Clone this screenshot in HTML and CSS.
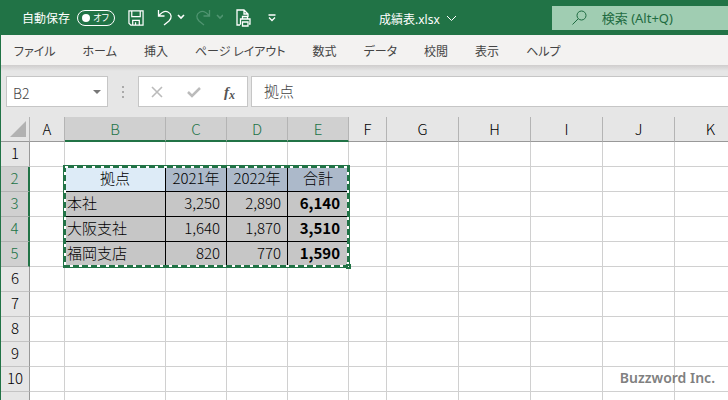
FILE: index.html
```html
<!DOCTYPE html>
<html lang="ja">
<head>
<meta charset="utf-8">
<title>成績表.xlsx</title>
<link rel="stylesheet" href="styles.css">
</head>
<body>
<div class="app">
  <header class="titlebar">
    <div class="quick">
      <label class="autosave">自動保存
        <span class="switch"><input type="checkbox" role="switch"><span class="knob"></span><span class="state">オフ</span></span>
      </label>
      <button class="tool save" aria-label="上書き保存"><svg width="16" height="16" viewBox="0 0 17 17"><path d="M1 1h15v15H3l-2-2zM4 1v6h9V1M5 16v-5h7v5M8 13v3"/></svg></button>
      <button class="tool undo" aria-label="元に戻す"><svg width="28" height="17" viewBox="0 0 28 17"><path d="M1.500 1v6h6M1.500 7C5 3 8 1.500 11 3c4 2 4 6 1 9l-5 4"/><path d="M21 6l3 3 3-3" stroke-width="1.600"/></svg></button>
      <button class="tool redo" aria-label="やり直し" disabled><svg width="28" height="17" viewBox="0 0 28 17"><path d="M14.500 1v6h-6M14.500 7C11 3 8 1.500 5 3c-4 2-4 6-1 9l5 4"/><path d="M22 6l3 3 3-3" stroke-width="1.600"/></svg></button>
      <button class="tool preview" aria-label="印刷プレビュー"><svg width="16" height="18" viewBox="0 0 16 18"><path d="M4 16H1V1h7l4 4v3M8 1v4h4M6.500 10V7.500h5V10M5 15h-.5v-5h9.500v5h-1M6.500 13h5.500v4h-5.500z"/></svg></button>
      <button class="tool more" aria-label="カスタマイズ"><svg width="8" height="8" viewBox="0 0 8 8"><path d="M0.500 1h7M1 3.500l3 3 3-3"/></svg></button>
    </div>
    <button class="doc">成績表.xlsx <svg width="11" height="7" viewBox="0 0 11 7"><path d="M1 1l4.500 4.500L10 1"/></svg></button>
    <label class="search"><svg width="15" height="15" viewBox="0 0 15 15"><circle cx="9.500" cy="5.500" r="4.500"/><path d="M6.200 8.800L.5 14.500"/></svg><input type="text" placeholder="検索 (Alt+Q)" aria-label="検索"></label>
  </header>
  <nav class="tabs">
    <a href="#">ファイル</a><a href="#">ホーム</a><a href="#">挿入</a><a href="#">ページ レイアウト</a><a href="#">数式</a><a href="#">データ</a><a href="#">校閲</a><a href="#">表示</a><a href="#">ヘルプ</a>
  </nav>
  <div class="formulabar">
    <div class="namebox"><input type="text" value="B2" aria-label="名前ボックス"><button aria-label="名前の一覧"><svg width="8" height="4" viewBox="0 0 8 4"><path d="M0 0h8L4 4z"/></svg></button></div>
    <svg class="grip" width="2" height="12" viewBox="0 0 2 12"><path d="M0 0h2v2H0zM0 5h2v2H0zM0 10h2v2H0z"/></svg>
    <div class="actions">
      <button aria-label="キャンセル" disabled><svg width="12" height="12" viewBox="0 0 12 12"><path d="M1 1l10 10M11 1L1 11"/></svg></button>
      <button aria-label="入力" disabled><svg width="14" height="12" viewBox="0 0 14 12"><path d="M1 6l4 4 8-8" stroke-width="2.500"/></svg></button>
      <button class="fx" aria-label="関数の挿入">f<sub>x</sub></button>
    </div>
    <input class="formula" type="text" value="拠点" aria-label="数式バー">
  </div>
  <main class="sheet">
    <table>
      <colgroup><col class="w-head"><col class="w-a"><col class="w-b"><col class="w-c"><col class="w-c"><col class="w-c"><col class="w-f"><col class="w-g"><col class="w-g"><col class="w-g"><col class="w-g"><col class="w-g"></colgroup>
      <thead><tr><th class="corner"><svg width="16" height="16" viewBox="0 0 16 16"><path d="M16 0v16H0z"/></svg></th><th>A</th><th class="on">B</th><th class="on">C</th><th class="on">D</th><th class="on">E</th><th>F</th><th>G</th><th>H</th><th>I</th><th>J</th><th>K</th></tr></thead>
      <tbody>
        <tr><th>1</th><td></td><td></td><td></td><td></td><td></td><td></td><td></td><td></td><td></td><td></td><td></td></tr>
        <tr><th class="on">2</th><td></td><td class="cell title active"><div class="marquee"><svg aria-hidden="true"><rect class="base" x="1.500" y="1.500" width="284" height="100"/><rect class="ants" x="2" y="2" width="283" height="99"/><rect class="handle" x="284" y="100" width="3" height="3"/></svg></div>拠点</td><td class="cell title">2021年</td><td class="cell title">2022年</td><td class="cell title">合計</td><td></td><td></td><td></td><td></td><td></td><td></td></tr>
        <tr><th class="on">3</th><td></td><td class="cell">本社</td><td class="cell num">3,250</td><td class="cell num">2,890</td><td class="cell num total">6,140</td><td></td><td></td><td></td><td></td><td></td><td></td></tr>
        <tr><th class="on">4</th><td></td><td class="cell">大阪支社</td><td class="cell num">1,640</td><td class="cell num">1,870</td><td class="cell num total">3,510</td><td></td><td></td><td></td><td></td><td></td><td></td></tr>
        <tr><th class="on">5</th><td></td><td class="cell">福岡支店</td><td class="cell num">820</td><td class="cell num">770</td><td class="cell num total">1,590</td><td></td><td></td><td></td><td></td><td></td><td></td></tr>
        <tr><th>6</th><td></td><td></td><td></td><td></td><td></td><td></td><td></td><td></td><td></td><td></td><td></td></tr>
        <tr><th>7</th><td></td><td></td><td></td><td></td><td></td><td></td><td></td><td></td><td></td><td></td><td></td></tr>
        <tr><th>8</th><td></td><td></td><td></td><td></td><td></td><td></td><td></td><td></td><td></td><td></td><td></td></tr>
        <tr><th>9</th><td></td><td></td><td></td><td></td><td></td><td></td><td></td><td></td><td></td><td></td><td></td></tr>
        <tr><th>10</th><td></td><td></td><td></td><td></td><td></td><td></td><td></td><td></td><td></td><td></td><td></td></tr>
        <tr><th></th><td></td><td></td><td></td><td></td><td></td><td></td><td></td><td></td><td></td><td></td><td></td></tr>
      </tbody>
    </table>
    <p class="credit">Buzzword Inc.</p>
  </main>
</div>
</body>
</html>
```
FILE: styles.css
```css
* { box-sizing: border-box; }
body { margin: 0; font-family: "Noto Sans CJK JP", sans-serif; overflow: hidden; }
button, input { font: inherit; color: inherit; border: 0; padding: 0; margin: 0; background: none; border-radius: 0; outline: 0; }
button { display: flex; align-items: center; }
svg { display: block; flex: none; fill: none; stroke: currentColor; }
.app { height: 100vh; display: flex; flex-direction: column; overflow: hidden; border-left: 1px solid #217346; background: #e6e6e6; }

.titlebar { flex: none; height: 35px; display: flex; align-items: center; background: #217346; color: #fff; font-family: "Noto Sans", "Noto Sans CJK JP", sans-serif; font-size: 12px; margin-left: -1px; }
.quick { display: flex; align-items: center; flex: none; width: 379px; padding-left: 22px; }
.autosave { display: flex; align-items: center; gap: 7px; }
.switch { position: relative; display: flex; align-items: center; justify-content: space-between; width: 38px; height: 16px; padding: 0 5px 0 4px; border: 1px solid #fff; border-radius: 8px; }
.switch input { position: absolute; inset: 0; width: 100%; height: 100%; opacity: 0; }
.knob { width: 8px; height: 8px; border-radius: 50%; background: #fff; }
.state { font-size: 9px; line-height: 14px; font-feature-settings: "palt"; }
.save { margin-left: 13px; }
.undo { margin-left: 13px; }
.redo { margin-left: 10px; color: #4f9470; }
.preview { margin-left: 13px; }
.more { margin-left: 16px; }
.tool svg { stroke-width: 1.3; }
.doc { gap: 6px; padding-top: 2px; }
.search { display: flex; align-items: center; gap: 15px; flex: 1; height: 24px; min-width: 0; margin-left: 95px; padding-left: 20px; background: #a0cdb2; color: #1e6b41; font-size: 13px; }
.search input { flex: 1; min-width: 0; }
.search input::placeholder { color: #1e6b41; opacity: 1; }

.tabs { flex: none; display: flex; gap: 27px; height: 30px; padding-left: 13px; background: #f3f2f1; font-size: 12px; line-height: 31px; font-feature-settings: "palt"; white-space: nowrap; }
.tabs a { color: #444; text-decoration: none; }

.formulabar { flex: none; display: flex; align-items: center; height: 52px; padding: 1px 0 0 5px; background: linear-gradient(#cfcdcd, #e6e6e6 6px); font-size: 14px; }
.namebox, .actions, .formula { height: 31px; border: 1px solid #c6c6c6; background: #fff; color: #444; }
.namebox { display: flex; align-items: center; width: 102px; padding: 0 6px; }
.namebox input { flex: 1; min-width: 0; font-weight: 300; padding-top: 3px; }
.namebox path, .grip path { fill: #777; stroke: none; }
.grip { margin: 0 14px; }
.grip path { fill: #aaa; }
.actions { display: flex; align-items: center; justify-content: space-between; width: 110px; padding: 0 12px; margin-right: 3px; color: #bbb; }
.actions svg { stroke-width: 1.6; }
.fx { color: #555; font-family: "Liberation Serif", serif; font-style: italic; font-weight: bold; font-size: 15px; line-height: 18px; }
.fx sub { font-size: 12px; line-height: 12px; vertical-align: baseline; align-self: flex-end; }
.formula { flex: 1; min-width: 0; padding: 0 12px 3px; border-right: 0; font-weight: 300; font-size: 15px; }

.sheet { flex: 1; min-height: 0; position: relative; overflow: hidden; }
table { table-layout: fixed; width: 746px; border-collapse: separate; border-spacing: 0; }
.w-head { width: 29px; }
.w-a { width: 35px; }
.w-b { width: 101px; }
.w-c { width: 61px; }
.w-f { width: 38px; }
.w-g { width: 72px; }
tr { height: 25px; }
th, td { height: 25px; padding: 0; border: 0 solid #d0d0d0; border-width: 0 1px 1px 0; font-size: 15px; line-height: 22px; white-space: nowrap; overflow: hidden; }
th { background: #e6e6e6; font-weight: 300; color: #000; text-align: center; }
td { background: #fff; font-weight: 300; }
tbody th, td { padding-bottom: 2px; }
thead th { border-color: #b4b4b4; border-bottom-color: #999; }
tbody th { border-color: #c4c4c4; border-right-color: #999; }
th.on { background: #d0d0d0; color: #217346; border-color: #b4b4b4; }
thead th.on { border-bottom: 2px solid #217346; }
tbody th.on { border-right: 2px solid #217346; }
.corner svg { margin-left: 9px; }
.corner path { fill: #b2b2b2; stroke: none; }
.cell { background: #c6c6c6; border-color: #000; padding: 0 2px 2px; }
.title { background: #acb9ca; text-align: center; }
.active { position: relative; overflow: visible; background: #ddebf7; }
.num { text-align: right; padding-right: 6px; }
.total { font-weight: 700; padding-right: 8px; }
.marquee { position: absolute; left: -2px; top: -2px; pointer-events: none; z-index: 1; }
.marquee svg { width: 289px; height: 105px; }
.base { stroke: #217346; stroke-width: 3; }
.ants { stroke: #fff; stroke-width: 2; stroke-dasharray: 3 6; }
.handle { fill: #fff; stroke: #217346; stroke-width: 2; }
.credit { position: absolute; right: 13px; bottom: 12px; margin: 0; font: 600 14px/20px "Noto Sans", sans-serif; color: #808080; }
```
